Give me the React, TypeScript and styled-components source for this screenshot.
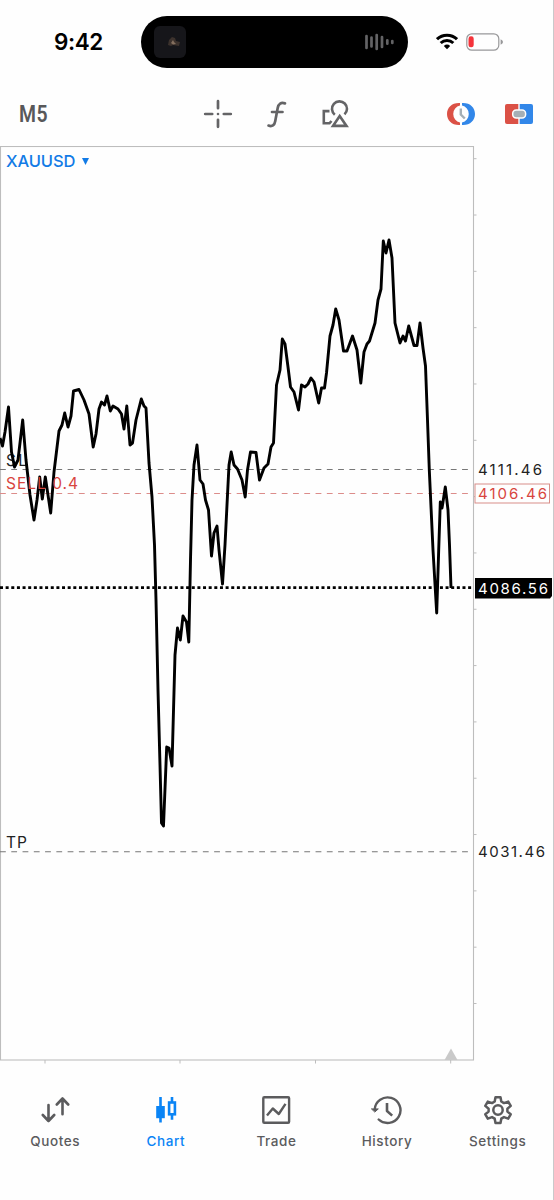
import React from "react";
import styled, { createGlobalStyle } from "styled-components";

const GlobalStyle = createGlobalStyle`
  * { box-sizing: border-box; }
  body { margin: 0; background: #fefefe; font-family: Inter, "Liberation Sans", sans-serif; }
`;

const Screen = styled.div`
  width: 554px;
  height: 1200px;
  display: flex;
  flex-direction: column;
  background: #fefefe;
  border-right: 1px solid #c9c9cb;
  overflow: hidden;
`;

const StatusBar = styled.header`
  height: 83px;
  padding: 0 48px 0 54px;
  display: flex;
  align-items: center;
`;

const Clock = styled.div`
  width: 87px;
  font-size: 22.5px;
  font-weight: 600;
  letter-spacing: -0.4px;
  color: #000;
`;

const Island = styled.div`
  width: 267px;
  height: 52px;
  border-radius: 26px;
  background: #000;
  display: flex;
  align-items: center;
  justify-content: space-between;
  padding: 0 14px 0 13px;
`;

const Artwork = styled.div`
  width: 32px;
  height: 32px;
  border-radius: 6px;
  background: #16161a;
`;

const StatusIcons = styled.div`
  display: flex;
  align-items: center;
  gap: 8px;
  margin-left: 28px;
`;

const Toolbar = styled.div`
  height: 63px;
  flex: none;
  display: flex;
  align-items: center;
  padding: 0 19px 2px 19px;
`;

const Timeframe = styled.div`
  width: 184px;
  font-family: Roboto, sans-serif;
  font-weight: 600;
  font-size: 24px;
  line-height: 28px;
  color: #58585a;
  letter-spacing: 0.6px;
  transform: scaleX(0.81);
  transform-origin: left;
`;

const ToolGroup = styled.div<{ $gap: number }>`
  display: flex;
  align-items: center;
  gap: ${(p) => p.$gap}px;
  & + & { margin-left: auto; }
`;

const ChartPane = styled.main`
  position: relative;
  height: 918px;
  flex: none;
`;

const SymbolPicker = styled.div`
  position: absolute;
  top: 5px;
  left: 6px;
  display: flex;
  align-items: center;
  gap: 7px;
  font-size: 16.5px;
  font-weight: 500;
  line-height: 20px;
  letter-spacing: -0.1px;
  color: #127be6;
`;

const Nav = styled.nav`
  flex: 1;
  display: grid;
  grid-template-columns: repeat(5, 1fr);
  padding: 31px 0 0 0;
`;

const NavItem = styled.div<{ $active?: boolean }>`
  display: flex;
  flex-direction: column;
  align-items: center;
  gap: 7px;
  color: ${(p) => (p.$active ? "#0a84f5" : "#5b5b5d")};
`;

const NavLabel = styled.span`
  font-size: 13.5px;
  font-weight: 450;
  line-height: 18px;
  letter-spacing: 0.6px;
`;

const line: [number, number][] = [
  [0, 438], [2.5, 446], [5, 432], [8.5, 407], [11.5, 452], [14.5, 467], [18, 460], [22.7, 420], [26, 460], [30, 495],
  [34, 520], [37, 500], [39.7, 477], [42.3, 499], [45.3, 477], [50.7, 513], [54, 472], [59, 431], [62, 425], [64.7, 413],
  [68, 427], [71, 416], [73.5, 391], [79, 389.5], [84, 400], [89, 414], [93.2, 447], [96, 434], [99, 409], [101.5, 402],
  [104.5, 405], [107, 396], [110.3, 411], [113, 406], [118, 409], [121.5, 414], [124, 429], [126.8, 406], [130, 445],
  [132.5, 443], [136, 420], [141.3, 399], [144, 406], [146, 408], [149, 463], [152, 497], [154.5, 545], [156, 600],
  [158, 690], [160, 765], [161.5, 823], [163.5, 826], [166.7, 747], [169, 748], [172, 766], [175, 655], [177.5, 628],
  [180.3, 640], [183, 616], [186.5, 622], [188.8, 642], [190.5, 560], [192, 500], [194, 465], [197, 445], [200, 480],
  [203, 484], [205.5, 500], [208.5, 510], [211.5, 556], [214, 533], [217, 526], [219, 550], [222.5, 584], [225, 545],
  [229, 465], [231.2, 452], [234, 465], [237.5, 469], [242, 480], [245.2, 497], [247.5, 470], [250.5, 452], [256, 452.5],
  [259.5, 480], [264, 468], [268, 464], [271, 447], [273.5, 443], [276.5, 385], [280, 370], [282.3, 339], [285, 344],
  [288, 367], [290.5, 387], [294, 392], [298.5, 410], [301.5, 385], [305, 387], [308, 384], [311, 378], [314, 382],
  [318.7, 403], [321.5, 388], [324.5, 388], [326.5, 373], [330, 336], [333, 325], [335.7, 309], [339, 320], [343.5, 351],
  [347, 351], [352.5, 336], [357, 350], [360.8, 383], [364, 352], [367, 344], [369.5, 341], [375, 323], [378, 300],
  [381, 289], [383.3, 241], [386, 253], [389, 240], [392, 258], [395, 323], [400, 343], [403, 336], [405.5, 341],
  [408.7, 326], [414, 345.5], [417, 345.5], [420, 323], [423, 348], [425.5, 366], [427.5, 420], [429.3, 470],
  [433, 550], [436.7, 613], [438.7, 550], [440.3, 502], [442, 508], [443, 502], [445.3, 487], [448, 510], [449.5, 545],
  [451, 588],
];

const priceTicks = Array.from({ length: 16 }, (_, i) => 158.7 + i * 56.32);
const timeTicks = [45, 180, 315.5, 450.7];

const Level = ({ y, color }: { y: number; color: string }) => (
  <line x1="0" x2="470" y1={y} y2={y} stroke={color} strokeWidth="1.1" strokeDasharray="5.8 5.47" />
);

const PriceText = ({ y, width, fill, children }: { y: number; width: number; fill: string; children: string }) => (
  <text x="478" y={y} fontSize="15" textLength={width} fill={fill}>{children}</text>
);

const PriceChart = () => (
  <svg width="553" height="918" viewBox="0 146 553 918" fontFamily="Inter, sans-serif" display="block">
    <rect x="0.5" y="146.5" width="473" height="913.5" fill="none" stroke="#bdbdbd" strokeWidth="1.1" />
    {priceTicks.map((y) => <line key={y} x1="474" x2="476.5" y1={y} y2={y} stroke="#bdbdbd" />)}
    {timeTicks.map((x) => <line key={x} x1={x} x2={x} y1="1060" y2="1063.5" stroke="#bdbdbd" />)}
    <path d="M451 1048.5l6.5 11.5h-13z" fill="#c9c9c9" />
    <text x="6" y="465.5" fontSize="15.5" textLength="21" fill="#222">SL</text>
    <text x="6" y="847.5" fontSize="15.5" textLength="21" fill="#222">TP</text>
    <Level y={469.5} color="#777" />
    <Level y={493.5} color="#dc8c8a" />
    <Level y={851.8} color="#777" />
    <line x1="0" x2="472" y1="587.7" y2="587.7" stroke="#000" strokeWidth="2.8" strokeDasharray="3 2.64" />
    <polyline points={line.map((p) => p.join(",")).join(" ")} fill="none" stroke="#000" strokeWidth="2.9" strokeLinejoin="round" />
    <text x="6" y="489.3" fontSize="15.5" textLength="72" fill="#d8453e">SELL 0.4</text>
    <PriceText y={475.2} width={64} fill="#222">4111.46</PriceText>
    <rect x="475" y="484" width="74.5" height="19" fill="#fefefe" stroke="#d88e89" />
    <PriceText y={499.2} width={69} fill="#d8453e">4106.46</PriceText>
    <path d="M475 578h77v18l-2 2.500h-75z" fill="#000" />
    <PriceText y={594} width={70} fill="#fff">4086.56</PriceText>
    <PriceText y={857.3} width={67} fill="#222">4031.46</PriceText>
  </svg>
);

const AlbumArt = () => (
  <Artwork>
    <svg width="32" height="32" viewBox="0 0 32 32">
      <path d="M14 19l1-5 3-3 3 1 1 3 4 1-1 4-6-1-2 1z" fill="#3c322d" />
      <path d="M17 17l2-3 1 2 2 2-3 .5z" fill="#85705f" />
    </svg>
  </Artwork>
);

const Waveform = () => (
  <svg width="30" height="18" viewBox="0 0 30 18" stroke="#636365" strokeWidth="2.7" strokeLinecap="round">
    <path d="M2.5 3v12M7.5 4.5v9M12.7 2v14M18 4v10M23.3 7.3v3.4M28.3 8v2" />
  </svg>
);

const Wifi = () => (
  <svg width="22" height="17" viewBox="0 0 22 17" fill="none" stroke="#000" strokeWidth="3">
    <path d="M1 6.2C6.5.8 15.5.8 21 6.2" />
    <path d="M4.7 10C8.3 6.5 13.700 6.500 17.300 10" />
    <path d="M7.800 12.900q3.200-2.600 6.400 0L11 16.200z" fill="#000" stroke="none" />
  </svg>
);

const Battery = () => (
  <svg width="38" height="18" viewBox="0 0 38 18">
    <rect x="0.8" y="0.8" width="32" height="16.4" rx="5" fill="none" stroke="#98989a" strokeWidth="1.2" />
    <rect x="2.5" y="3.3" width="5.2" height="11" rx="2.4" fill="#f5333a" />
    <path d="M34.6 6.300q2.400 1 2.400 2.700t-2.400 2.700z" fill="#98989a" />
  </svg>
);

const Crosshair = () => (
  <svg width="30" height="30" viewBox="0 0 30 30" stroke="#646466" strokeWidth="2.7" strokeLinecap="round">
    <path d="M15 2.200v7M15 20.800v7M2.200 15h7M20.800 15h7" />
    <circle cx="15" cy="15" r="1.3" fill="#646466" stroke="none" />
  </svg>
);

const FunctionIcon = () => (
  <svg width="22" height="30" viewBox="0 0 22 30" fill="none" stroke="#646466" strokeWidth="2.7" strokeLinecap="round">
    <path d="M19 4.400c-4-1.300-6.500.3-7.300 4.600L9.200 22.300c-.7 4-3 5.600-6.700 4.300M6 13h10.500" />
  </svg>
);

const Shapes = () => (
  <svg width="28" height="30" viewBox="0 0 28 30" fill="none" stroke="#646466" strokeWidth="2.6">
    <path d="M8.500 12.100H2.800V24.300H8.500L10.500 22" />
    <path d="M13.800 15.700A7.500 7.500 0 1 1 23.500 15.400" />
    <path d="M18.700 17L25.500 26.900H12z" />
  </svg>
);

const ClockTrade = () => (
  <svg width="30" height="24" viewBox="0 0 30 24" fill="none">
    <path d="M14 1C6 .5 1 5.500 1 12s5 11.500 13 11v-2.600a8.600 8.600 0 0 1 0-16.800z" fill="#db5146" />
    <path d="M16 1c8-.5 13 4.500 13 11s-5 11.500-13 11v-2.600a8.600 8.600 0 0 0 0-16.800z" fill="#3287e9" />
    <path d="M14.800 6.500v6l4 4" stroke="#a5afb6" strokeWidth="2.400" />
  </svg>
);

const OneClickTrade = () => (
  <svg width="30" height="22" viewBox="0 0 30 22">
    <path d="M3 1h11.300v20H3a2 2 0 0 1-2-2V3a2 2 0 0 1 2-2z" fill="#db5146" />
    <path d="M15.700 1H27a2 2 0 0 1 2 2v16a2 2 0 0 1-2 2H15.700z" fill="#3287e9" />
    <rect x="8.700" y="6.900" width="12.900" height="8.200" rx="3.500" fill="#a5afb6" stroke="#fefefe" strokeWidth="1.500" />
  </svg>
);

const QuotesIcon = () => (
  <svg width="30" height="30" viewBox="0 0 30 30" fill="none" stroke="currentColor" strokeWidth="2.600" strokeLinecap="round" strokeLinejoin="round">
    <path d="M8.500 10v16M2.800 20l5.700 6 5.700-6M22.500 19.200V3.500M16.800 9.500l5.700-6 5.700 6" />
  </svg>
);

const CandlesIcon = () => (
  <svg width="30" height="30" viewBox="0 0 30 30" fill="none" stroke="currentColor" strokeWidth="2.600">
    <path d="M9.500 2v25.500M21 2v5M21 20v4.700" />
    <rect x="5.200" y="11" width="8.600" height="12.200" fill="currentColor" stroke="none" />
    <rect x="18.100" y="7.500" width="5.800" height="11.800" />
  </svg>
);

const TradeIcon = () => (
  <svg width="30" height="30" viewBox="0 0 30 30" fill="none" stroke="currentColor" strokeWidth="2.400" strokeLinejoin="round">
    <rect x="2.300" y="2.200" width="25.800" height="25.600" rx="1" />
    <path d="M6 20.500l5.800-7 6 5.500L24.500 8.800" />
  </svg>
);

const HistoryIcon = () => (
  <svg width="32" height="30" viewBox="0 0 32 30" fill="none" stroke="currentColor" strokeWidth="2.400" strokeLinecap="round" strokeLinejoin="round">
    <path d="M3.700 14.500A12.900 12.800 0 1 1 7.700 24.500" />
    <path d="M.8 13.900h6.500l-3.200 2.900z" fill="currentColor" strokeWidth="1" />
    <path d="M16 8v8l5.200 4.600" strokeLinecap="butt" strokeWidth="2.600" />
  </svg>
);

const SettingsIcon = () => (
  <svg width="30" height="30" viewBox="0 0 30 30" fill="none" stroke="currentColor" strokeWidth="2.500" strokeLinejoin="round">
    <path d="M12.500 2.200h5l.8 4.300 2.700 1.600 4.200-1.500 2.500 4.300-3.300 2.800v2.900l3.300 2.700-2.500 4.300-4.200-1.500-2.700 1.600-.8 4.300h-5l-.8-4.300L9 22.100l-4.200 1.500-2.500-4.300 3.300-2.700v-2.900l-3.300-2.800 2.500-4.300L9 8.100l2.700-1.600z" />
    <circle cx="15" cy="15" r="4.700" />
  </svg>
);

const tabs = [
  { label: "Quotes", Icon: QuotesIcon },
  { label: "Chart", Icon: CandlesIcon, active: true },
  { label: "Trade", Icon: TradeIcon },
  { label: "History", Icon: HistoryIcon },
  { label: "Settings", Icon: SettingsIcon },
];

export default function App() {
  return (
    <Screen>
      <GlobalStyle />
      <StatusBar>
        <Clock>9:42</Clock>
        <Island>
          <AlbumArt />
          <Waveform />
        </Island>
        <StatusIcons>
          <Wifi />
          <Battery />
        </StatusIcons>
      </StatusBar>
      <Toolbar>
        <Timeframe>M5</Timeframe>
        <ToolGroup $gap={33}>
          <Crosshair />
          <FunctionIcon />
          <Shapes />
        </ToolGroup>
        <ToolGroup $gap={28}>
          <ClockTrade />
          <OneClickTrade />
        </ToolGroup>
      </Toolbar>
      <ChartPane>
        <PriceChart />
        <SymbolPicker>
          XAUUSD
          <svg width="7" height="7" viewBox="0 0 7 7"><path d="M0 0h7L3.500 7z" fill="currentColor" /></svg>
        </SymbolPicker>
      </ChartPane>
      <Nav>
        {tabs.map(({ label, Icon, active }) => (
          <NavItem key={label} $active={active}>
            <Icon />
            <NavLabel>{label}</NavLabel>
          </NavItem>
        ))}
      </Nav>
    </Screen>
  );
}
